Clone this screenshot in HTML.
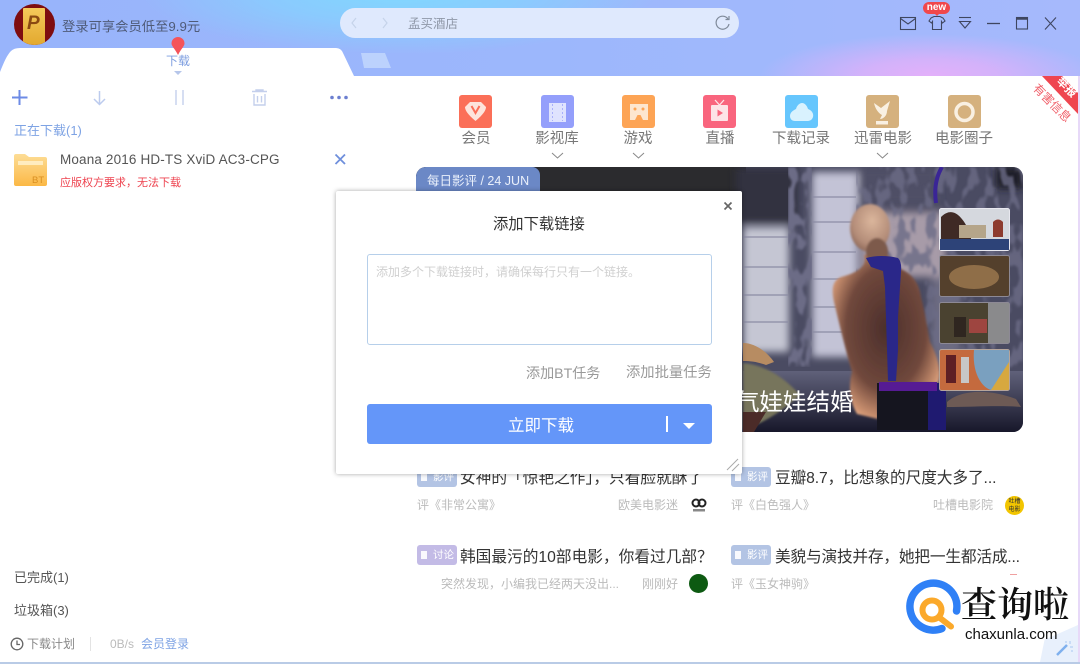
<!DOCTYPE html>
<html><head><meta charset="utf-8">
<style>
html,body{margin:0;padding:0;width:1080px;height:664px;overflow:hidden;background:#fff}
body{position:relative;font-family:"Liberation Sans","Noto Sans CJK SC",sans-serif;color:#555}
.t{position:absolute;white-space:nowrap;line-height:1}
.a{position:absolute}
.ic{position:absolute;width:33px;height:33px;border-radius:3px;top:95px}
.nl{position:absolute;top:131px;font-size:14.5px;color:#777;width:90px;text-align:center;line-height:16px}
.tag{position:absolute;width:40px;height:20px;border-radius:3px;color:#fff;font-size:10.5px;line-height:20px;text-align:right;padding-right:3px;box-sizing:border-box}
.tag:before{content:"";position:absolute;left:4px;top:6px;width:6px;height:8px;background:#fff;opacity:.9}
.h{position:absolute;font-size:15.7px;color:#333;white-space:nowrap;line-height:20px}
.s{position:absolute;font-size:12px;color:#bbb;white-space:nowrap;line-height:14px}
</style></head><body>
<!-- header -->
<div class="a" style="left:0;top:0;width:1080px;height:76px;background:radial-gradient(ellipse 170px 42px at 930px 76px,#e3b0fa 0%,rgba(227,176,250,.75) 40%,rgba(227,176,250,0) 100%),radial-gradient(ellipse 260px 62px at 400px -8px,#80d8ff 0%,rgba(128,216,255,.6) 50%,rgba(128,216,255,0) 100%),linear-gradient(90deg,#98b4fb,#9cb7fc 50%,#a6b9fc)"></div>
<svg class="a" style="left:0;top:46px" width="400" height="30"><path d="M0 26 C4 16 7 9 11 5 Q14 2 20 2 L336 2 Q341 2 343 7 L354 30 L0 30 Z" fill="#fff"/><path d="M361 7 L385 7 L391 22 L364 22 Z" fill="#bcd2fd"/></svg>
<!-- avatar -->
<div class="a" style="left:14px;top:4px;width:41px;height:41px;border-radius:50%;background:#7e0d10;overflow:hidden"><div class="a" style="left:9px;top:4px;width:22px;height:37px;background:linear-gradient(#f4c95a,#e3a92f);border-radius:1px"></div></div>
<div class="t" style="left:27px;top:14px;font-size:19px;font-weight:bold;font-style:italic;color:#8a4a12">P</div>
<div class="t" style="left:62px;top:20px;font-size:13.3px;color:#4f5b78">登录可享会员低至9.9元</div>
<!-- pin -->
<svg class="a" style="left:170px;top:37px" width="16" height="20"><path d="M8 18 C5 12 1.500 9 1.500 6.500 A6.500 6.500 0 0 1 14.500 6.500 C14.500 9 11 12 8 18 Z" fill="#f4535a"/></svg>
<div class="t" style="left:166px;top:55px;font-size:12px;color:#7d9ee0">下载</div>
<div class="a" style="left:174px;top:71px;border:4px solid transparent;border-top:4px solid #b6c6ea"></div>
<!-- address bar -->
<div class="a" style="left:340px;top:8px;width:399px;height:30px;border-radius:15px;background:#dfe9fd"></div>
<svg class="a" style="left:348px;top:14px" width="50" height="18" fill="none" stroke="#c5d3ea" stroke-width="1.200"><path d="M8 4 L4 9 L8 14"/><path d="M35 4 L39 9 L35 14"/></svg>
<div class="t" style="left:408px;top:18px;font-size:12.5px;color:#8f98a8">孟买酒店</div>
<svg class="a" style="left:714px;top:14px" width="18" height="18" fill="none" stroke="#7f8a9a" stroke-width="1.200"><path d="M14 5 A6.500 6.500 0 1 0 15 10"/><path d="M11.500 5.500 L15 5.500 L15 2"/></svg>
<!-- window controls -->
<svg class="a" style="left:895px;top:0" width="170" height="34" fill="none" stroke="#3f4660" stroke-width="1.100">
<rect x="5.500" y="17.500" width="15" height="12"/><path d="M5.500 18.500 L13 24 L20.500 18.500"/>
<path d="M36 18 L39 16.500 L45 16.500 L48 18 L50 21 L47.500 23 L46.500 21.500 L46.500 29.500 L37.500 29.500 L37.500 21.500 L36.500 23 L34 21 Z"/>
<path d="M64 17.500 H76"/><path d="M64.500 21.500 H75.500 L70 28 Z"/>
<path d="M92 23.500 H105" stroke-width="1.300"/>
<rect x="121.500" y="17.500" width="11" height="11.500"/><path d="M121.500 18.500 H132.500" stroke-width="2.500"/>
<path d="M150 17.500 L161 29.500 M161 17.500 L150 29.500"/>
</svg>
<div class="a" style="left:923px;top:2px;width:27px;height:12px;border-radius:7px;background:#f0474c;color:#fff;font-size:10px;font-weight:bold;line-height:12px;text-align:center">new</div>
<div class="a" style="left:934px;top:13px;border:3px solid transparent;border-top:3px solid #f0474c"></div>
<div class="a" style="left:1078px;top:76px;width:2px;height:588px;background:#e7d9f8"></div>
<!-- toolbar -->
<svg class="a" style="left:0;top:85px" width="360" height="26" fill="none">
<path d="M19.500 5 V20 M12 12.500 H27.500" stroke="#6d8be6" stroke-width="2"/>
<path d="M99.500 6 V19 M94 14 L99.500 19.500 L105 14" stroke="#bccbee" stroke-width="1.500"/>
<path d="M176 5 V20 M183 5 V20" stroke="#c9d3ee" stroke-width="1.500"/>
<path d="M252 6.500 H267 M256 6.500 V5 H263 V6.500 M254 9 V20 H265 V9 M257.500 11 V17.500 M261.500 11 V17.500" stroke="#c4cfec" stroke-width="1.400"/>
<circle cx="332" cy="12.500" r="1.800" fill="#6c7fd0"/><circle cx="339" cy="12.500" r="1.800" fill="#6c7fd0"/><circle cx="346" cy="12.500" r="1.800" fill="#6c7fd0"/>
</svg>
<div class="t" style="left:14px;top:124px;font-size:13px;color:#7ea3e4">正在下载(1)</div>
<!-- folder -->
<svg class="a" style="left:14px;top:153px" width="33" height="34"><defs><linearGradient id="fg" x1="0" y1="0" x2="0" y2="1"><stop offset="0" stop-color="#fddd96"/><stop offset="1" stop-color="#fbb845"/></linearGradient></defs><path d="M0 3 Q0 1 2 1 H11 L15 4 H31 Q33 4 33 6 V31 Q33 33 31 33 H2 Q0 33 0 31 Z" fill="url(#fg)"/><rect x="4" y="8" width="25" height="4" fill="#fff3cf" opacity=".8"/></svg>
<div class="t" style="left:32px;top:176px;font-size:9.500px;color:#d98f22">BT</div>
<div class="t" style="left:60px;top:153px;font-size:13.500px;color:#555;letter-spacing:.15px">Moana 2016 HD-TS XviD AC3-CPG</div>
<div class="t" style="left:60px;top:178px;font-size:11px;color:#ee4450">应版权方要求，无法下载</div>
<svg class="a" style="left:334px;top:153px" width="13" height="13"><path d="M1.500 1.500 L11 11 M11 1.500 L1.500 11" stroke="#6f8fdc" stroke-width="1.800"/></svg>
<div class="t" style="left:14px;top:571px;font-size:13px;color:#555">已完成(1)</div>
<div class="t" style="left:14px;top:604px;font-size:13px;color:#555">垃圾箱(3)</div>
<svg class="a" style="left:10px;top:637px" width="14" height="14" fill="none" stroke="#666" stroke-width="1.300"><circle cx="7" cy="7" r="5.800"/><path d="M7 3.500 V7.500 H10"/></svg>
<div class="t" style="left:27px;top:638px;font-size:12px;color:#888">下载计划</div>
<div class="a" style="left:90px;top:637px;width:1px;height:14px;background:#e3e3e3"></div>
<div class="t" style="left:110px;top:638px;font-size:12px;color:#bbb">0B/s</div>
<div class="t" style="left:141px;top:638px;font-size:12px;color:#7ea3e4">会员登录</div>
<div class="a" style="left:0;top:662px;width:1080px;height:2px;background:#b9cbe6"></div>
<!-- nav icons -->
<div class="ic" style="left:459px;background:#fb6f58"></div>
<svg class="a" style="left:459px;top:95px" width="33" height="33"><path d="M6 12 L11 7 H22 L27 12 C27 17 20 23 16.500 26 C13 23 6 17 6 12 Z" fill="#fde4dc"/><path d="M12.500 11 L16.500 18 L20.500 11" fill="none" stroke="#fb6f58" stroke-width="2"/></svg>
<div class="ic" style="left:541px;background:#949ffb"></div>
<svg class="a" style="left:541px;top:95px" width="33" height="33"><rect x="8" y="8" width="17" height="19" fill="#dfe3fe"/><path d="M11.500 9 V26 M21.500 9 V26" stroke="#a9b1fb" stroke-width="1" stroke-dasharray="2 2"/></svg>
<div class="ic" style="left:622px;background:#fda455"></div>
<svg class="a" style="left:622px;top:95px" width="33" height="33"><path d="M8 9 H26 V25 H21 L18.500 20 H15.500 L13 25 H8 Z" fill="#fde6cf"/><circle cx="13" cy="14" r="1.500" fill="#fda455"/><circle cx="21" cy="14" r="1.500" fill="#fda455"/></svg>
<div class="ic" style="left:703px;background:#f9657e"></div>
<svg class="a" style="left:703px;top:95px" width="33" height="33"><path d="M12 5 L16.500 10 L21 5" stroke="#fde3e7" fill="none" stroke-width="1.300"/><rect x="8" y="10" width="17" height="16" rx="1" fill="#fde3e7"/><path d="M14.500 14.500 L20 18 L14.500 21.500 Z" fill="#f9657e"/></svg>
<div class="ic" style="left:785px;background:#66c6fd"></div>
<svg class="a" style="left:785px;top:95px" width="33" height="33"><path d="M5 21 C5 17 9 15 11 14 C12 10 15 8 17 8 C20 8 22 11 23 14 C26 15 29 18 28 22 C27 25 25 26 22 26 H10 C7 26 5 24 5 21 Z" fill="#d9f2fe"/></svg>
<div class="ic" style="left:866px;background:#d5b17e"></div>
<svg class="a" style="left:866px;top:95px" width="33" height="33"><path d="M8 8 L15 13 L24 6 L21 16 C21 21 17 24 14 24 L16 20 C12 18 9 13 8 8 Z" fill="#f9f0e2"/><rect x="10" y="26" width="12" height="3.500" fill="#f9f0e2"/></svg>
<div class="ic" style="left:948px;background:#d5b17e"></div>
<svg class="a" style="left:948px;top:95px" width="33" height="33"><circle cx="16.500" cy="17" r="8.500" fill="none" stroke="#f9f0e2" stroke-width="3.500"/></svg>
<div class="nl" style="left:431px">会员</div><div class="nl" style="left:512px">影视库</div><div class="nl" style="left:593px">游戏</div><div class="nl" style="left:675px">直播</div><div class="nl" style="left:756px">下载记录</div><div class="nl" style="left:838px">迅雷电影</div><div class="nl" style="left:919px">电影圈子</div>
<svg class="a" style="left:550px;top:151px" width="345" height="9" fill="none" stroke="#888" stroke-width="1"><path d="M2 2 L7.500 7 L13 2"/><path d="M83 2 L88.500 7 L94 2"/><path d="M327 2 L332.500 7 L338 2"/></svg>
<!-- ribbon -->
<svg class="a" style="left:1020px;top:76px" width="60" height="56" font-family="Liberation Sans,Noto Sans CJK SC,sans-serif"><path d="M22 0 H42 L58 17 V38 Z" fill="#ef4650"/><text transform="translate(47 11) rotate(45)" y="4" font-size="11.500" fill="#fff" text-anchor="middle" font-weight="bold">举报</text><text transform="translate(32 27) rotate(45)" y="4" font-size="12" fill="#f0606a" text-anchor="middle">有害信息</text></svg>
<!-- hero -->
<svg class="a" style="left:416px;top:167px" width="607" height="265">
<defs>
<clipPath id="c"><rect width="607" height="265" rx="10"/></clipPath>
<radialGradient id="sk" cx=".5" cy=".45" r=".62"><stop offset="0" stop-color="#4c2f2b"/><stop offset=".6" stop-color="#70483c"/><stop offset=".9" stop-color="#cf9472"/><stop offset="1" stop-color="#efbb96"/></radialGradient>
<radialGradient id="hd" cx=".55" cy=".35" r=".7"><stop offset="0" stop-color="#dbb69c"/><stop offset=".7" stop-color="#b38c78"/><stop offset="1" stop-color="#8a6556"/></radialGradient>
<linearGradient id="bed" x1="0" y1="0" x2="0" y2="1"><stop offset="0" stop-color="#60617a"/><stop offset="1" stop-color="#17172a"/></linearGradient>
<filter id="bl"><feGaussianBlur stdDeviation="4"/></filter><filter id="bl2"><feGaussianBlur stdDeviation="1"/></filter>
<filter id="n" x="0" y="0" width="100%" height="100%"><feTurbulence type="fractalNoise" baseFrequency=".1 .05" numOctaves="2" seed="3"/><feColorMatrix values="0 0 0 0 .15  0 0 0 0 .15  0 0 0 0 .24  0 0 0 10 -4.900"/><feGaussianBlur stdDeviation="1"/></filter>
</defs>
<g clip-path="url(#c)">
<rect width="607" height="265" fill="#4a4b62"/>
<rect x="0" y="0" width="330" height="40" fill="#2b2b2e"/>
<g filter="url(#bl)">
<rect x="320" y="0" width="62" height="56" fill="#323341"/>
<rect x="327" y="60" width="46" height="125" fill="#c5c6d3"/>
<rect x="396" y="5" width="46" height="185" fill="#c3c3d6"/>
<rect x="442" y="0" width="80" height="38" fill="#4f5066"/>
<rect x="445" y="45" width="85" height="65" fill="#a79ba8"/>
<rect x="515" y="110" width="30" height="90" fill="#6d6c82"/>
<rect x="580" y="0" width="27" height="22" fill="#1f1f28"/>
</g>
<rect x="372" y="0" width="24" height="200" filter="url(#n)"/>
<rect x="440" y="0" width="167" height="205" filter="url(#n)" opacity=".8"/>
<g stroke="#8a8ba3" stroke-width="2" opacity=".6"><path d="M327 70 H372 M327 100 H372 M327 128 H372 M327 155 H372 M396 30 H440 M396 55 H440 M396 85 H440 M396 112 H440 M396 140 H440 M396 165 H440"/></g>
<rect x="327" y="204" width="280" height="61" fill="url(#bed)"/>
<path d="M327 196 C350 198 370 212 384 228 C365 245 345 258 327 262 Z" fill="#77745c" filter="url(#bl2)"/>
<path d="M327 176 C340 176 352 186 358 195 L350 198 C342 195 335 194 327 194 Z" fill="#b78c62"/>
<path d="M327 245 H350 L338 265 H327 Z" fill="#4b2b28"/>
<path d="M531 235 C545 222 575 222 600 232 L605 240 C585 238 555 240 531 240 Z" fill="#6d5a55"/>
<!-- figure -->
<g filter="url(#bl2)">
<path d="M448 88 C452 100 440 106 425 110 C415 114 416 125 418 135 C424 160 430 185 436 205 C432 220 434 235 441 247 L462 252 L462 216 L522 216 C526 205 522 190 514 175 C512 165 510 150 505 130 C503 115 495 105 480 100 L472 88 Z" fill="url(#sk)"/>
<ellipse cx="454" cy="61" rx="20" ry="24" fill="url(#hd)"/>
<ellipse cx="461" cy="85" rx="11" ry="14" fill="#7d5a4b"/>
</g>
<path d="M450 91 Q465 87 482 91 Q486 95 485 105 L482 150 V183 L480 214 H472 L471 183 L469 120 L467 104 L455 100 Z" fill="#2a2789"/>
<path d="M461 216 H529 V263 H461 Z" fill="#15151f"/><rect x="512" y="216" width="18" height="47" fill="#1f1a70"/>
<rect x="463" y="215" width="58" height="9" fill="#561b94"/>
<path d="M526 0 C520 10 518 22 520 36" stroke="#3a2596" stroke-width="4" fill="none"/>
<!-- thumbs -->
<rect x="523.500" y="41.500" width="70" height="42" rx="2" fill="#d5d8de" stroke="#e8e8ef"/><rect x="524" y="72" width="69" height="11" fill="#2d4378"/><path d="M525 72 V50 C535 40 545 45 555 68 L555 72 Z" fill="#3f2a25"/><rect x="543" y="58" width="27" height="13" fill="#b5a58a"/><path d="M577 70 V55 Q582 50 587 55 V70 Z" fill="#8d3b2f"/>
<rect x="523.500" y="88.500" width="70" height="41" rx="2" fill="#54402c" stroke="#8d8995"/><ellipse cx="558" cy="110" rx="25" ry="12" fill="#8f6e48"/>
<rect x="523.500" y="135.500" width="70" height="41" rx="2" fill="#4a4230" stroke="#8d8995"/><rect x="572" y="136" width="21" height="40" fill="#8a8a8c"/><rect x="553" y="152" width="18" height="14" fill="#9e4540"/><rect x="538" y="150" width="12" height="20" fill="#2f2620"/>
<rect x="523.500" y="182.500" width="70" height="41" rx="2" fill="#c46a3e" stroke="#b6a59b"/><path d="M558 183 H593 V223 H575 C565 220 556 205 558 183 Z" fill="#7aa0bf"/><path d="M575 223 L593 195 V223 Z" fill="#d7a83f"/><rect x="530" y="188" width="10" height="28" fill="#5e1f24"/><rect x="545" y="190" width="8" height="26" fill="#c7c7c7"/>
<rect x="0" y="0" width="124" height="32" fill="#6b88c6" rx="8"/><rect x="0" y="24" width="124" height="8" fill="#6b88c6"/>
<text x="11" y="18" font-size="12.500" fill="#eaf0fb" font-family="Liberation Sans,Noto Sans CJK SC,sans-serif">每日影评 / 24 JUN</text>
<text x="320" y="243" font-size="23.500" fill="#fff" font-family="Liberation Sans,Noto Sans CJK SC,sans-serif">气娃娃结婚</text>
</g></svg>
<!-- articles -->
<div class="tag" style="left:417px;top:467px;background:#b3c4e4">影评</div>
<div class="h" style="left:460px;top:469px">女神的「惊艳之作」，只看脸就酥了</div>
<div class="s" style="left:417px;top:498px">评《非常公寓》</div><div class="s" style="left:618px;top:498px">欧美电影迷</div>
<svg class="a" style="left:690px;top:498px" width="18" height="15" fill="none"><circle cx="6" cy="5" r="3.500" stroke="#222" stroke-width="2"/><circle cx="12" cy="5" r="3.500" stroke="#222" stroke-width="2"/><rect x="3" y="11" width="12" height="2.500" fill="#888"/></svg>
<div class="tag" style="left:731px;top:467px;background:#b3c4e4">影评</div>
<div class="h" style="left:775px;top:469px;letter-spacing:-.1px">豆瓣8.7，比想象的尺度大多了...</div>
<div class="s" style="left:731px;top:498px">评《白色强人》</div><div class="s" style="left:933px;top:498px">吐槽电影院</div>
<div class="a" style="left:1005px;top:496px;width:19px;height:19px;border-radius:50%;background:#f2c500;color:#333;font-size:6px;line-height:8px;text-align:center;box-sizing:border-box;padding-top:2px">吐槽<br>电影</div>
<div class="tag" style="left:417px;top:545px;background:#c3bbe6">讨论</div>
<div class="h" style="left:460px;top:548px">韩国最污的10部电影，你看过几部？</div>
<div class="s" style="left:441px;top:577px">突然发现，小编我已经两天没出...</div><div class="s" style="left:642px;top:577px">刚刚好</div>
<div class="a" style="left:689px;top:574px;width:19px;height:19px;border-radius:50%;background:#0d5a12"></div>
<div class="tag" style="left:731px;top:545px;background:#b3c4e4">影评</div>
<div class="h" style="left:775px;top:548px;letter-spacing:-.2px">美貌与演技并存，她把一生都活成...</div>
<div class="s" style="left:731px;top:577px">评《玉女神驹》</div>
<div class="a" style="left:1010px;top:574px;width:7px;height:1px;background:#f0a0a0"></div>
<!-- dialog -->
<div class="a" style="left:336px;top:191px;width:406px;height:283px;background:#fff;border-radius:2px;box-shadow:0 0 5px rgba(0,0,0,.35)"></div>
<svg class="a" style="left:723px;top:201px" width="10" height="10"><path d="M1.500 1.500 L8.500 8.500 M8.500 1.500 L1.500 8.500" stroke="#666" stroke-width="1.700"/></svg>
<div class="t" style="left:493px;top:217px;font-size:15.3px;color:#333">添加下载链接</div>
<div class="a" style="left:367px;top:254px;width:343px;height:89px;border:1px solid #b6cfea;border-radius:3px"></div>
<div class="t" style="left:376px;top:266px;font-size:12px;color:#d0d0d0">添加多个下载链接时，请确保每行只有一个链接。</div>
<div class="t" style="left:526px;top:366px;font-size:14.1px;color:#999">添加BT任务</div>
<div class="t" style="left:626px;top:366px;font-size:14.3px;color:#999">添加批量任务</div>
<div class="a" style="left:367px;top:404px;width:345px;height:40px;background:#6496f9;border-radius:3px"></div>
<div class="t" style="left:508px;top:418px;font-size:16.5px;color:#fff">立即下载</div>
<div class="a" style="left:666px;top:416px;width:2px;height:16px;background:#fff"></div>
<div class="a" style="left:683px;top:423px;border:6px solid transparent;border-top:6px solid #fff"></div>
<svg class="a" style="left:726px;top:458px" width="14" height="14" stroke="#aaa" stroke-width="1"><path d="M1 12 L12 1 M6 13 L13 6"/></svg>
<!-- watermark -->
<div class="a" style="left:1040px;top:625px;width:38px;height:37px;background:#e8f0fc;clip-path:polygon(100% 0,100% 100%,0 100%,12% 40%)"></div>
<svg class="a" style="left:1055px;top:638px" width="20" height="20"><path d="M2 17 L12 7" stroke="#7fb0ee" stroke-width="2.500"/><path d="M15 3 V6 M18 9 H15 M11 3 V5 M18 13 H16" stroke="#a9c9f2" stroke-width="1"/></svg>
<svg class="a" style="left:900px;top:575px" width="70" height="70" fill="none"><path d="M42 53.500 A23.500 23.500 0 1 1 56.500 36" stroke="#2f80f6" stroke-width="7.500" stroke-linecap="round"/><circle cx="32" cy="35" r="9.500" stroke="#fba92b" stroke-width="6"/><path d="M40 43 L51 51.500" stroke="#fba92b" stroke-width="6" stroke-linecap="round"/></svg>
<div class="t" style="left:961px;top:585px;font-size:36px;color:#111;font-family:'Noto Serif CJK SC','Noto Sans CJK SC',serif;font-weight:600">查询啦</div>
<div class="t" style="left:965px;top:627px;font-size:15px;color:#111">chaxunla.com</div>
</body></html>
